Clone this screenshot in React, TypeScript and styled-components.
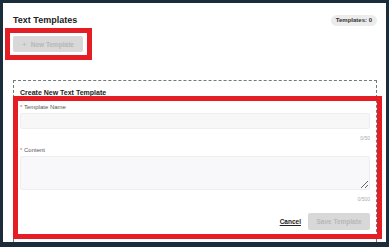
import styled, { createGlobalStyle } from "styled-components";

const GlobalStyle = createGlobalStyle`
  * { box-sizing: border-box; }
  html, body { margin: 0; padding: 0; }
  body {
    background: #1b2c3a;
    font-family: "Liberation Sans", Arial, sans-serif;
  }
`;

export default function App() {
  return (
    <>
      <GlobalStyle />
      <Frame>
        <Panel>
          <Header>
            <Title>Text Templates</Title>
            <Badge>Templates: 0</Badge>
          </Header>

          <Marked $gap={10}>
            <GhostButton disabled>
              <span>+</span> New Template
            </GhostButton>
            <Highlight $top={-8} $right={-9} $bottom={-8} $left={-8} />
          </Marked>

          <FormBox>
            <FormTitle>Create New Text Template</FormTitle>
            <Marked $gap={6} $stretch>
              <Fields>
                <Field>
                  <Label>
                    <Star>*</Star> Template Name
                  </Label>
                  <TextInput defaultValue="" />
                  <Counter>0/50</Counter>
                </Field>
                <Field>
                  <Label>
                    <Star>*</Star> Content
                  </Label>
                  <TextArea defaultValue="" />
                  <Counter>0/500</Counter>
                </Field>
                <Actions>
                  <CancelLink>Cancel</CancelLink>
                  <SaveButton disabled>Save Template</SaveButton>
                </Actions>
              </Fields>
              <Highlight $top={-7} $right={-12} $bottom={-9} $left={-7} />
            </Marked>
          </FormBox>
        </Panel>
      </Frame>
    </>
  );
}

const Frame = styled.div`
  width: 389px;
  height: 247px;
  padding: 3px 3px 5px 3px;
  background: #1b2c3a;
`;

const Panel = styled.div`
  height: 100%;
  background: #fff;
  padding: 11px 9px 0 10px;
  display: flex;
  flex-direction: column;
  overflow: hidden;
`;

const Header = styled.div`
  display: flex;
  align-items: center;
  justify-content: space-between;
  height: 12px;
`;

const Title = styled.h1`
  margin: 0;
  font-size: 9px;
  font-weight: 700;
  color: #222;
`;

const Badge = styled.span`
  height: 11px;
  padding: 0 5px;
  border-radius: 6px;
  background: #ececec;
  color: #333;
  font-size: 6px;
  font-weight: 600;
  display: flex;
  align-items: center;
`;

/* annotation overlays */
const Marked = styled.div<{ $gap: number; $stretch?: boolean }>`
  position: relative;
  margin-top: ${({ $gap }) => $gap}px;
  align-self: ${({ $stretch }) => ($stretch ? "stretch" : "flex-start")};
`;

const Highlight = styled.div<{
  $top: number;
  $right: number;
  $bottom: number;
  $left: number;
}>`
  position: absolute;
  top: ${({ $top }) => $top}px;
  right: ${({ $right }) => $right}px;
  bottom: ${({ $bottom }) => $bottom}px;
  left: ${({ $left }) => $left}px;
  border: 5px solid #e51d24;
  pointer-events: none;
`;

const GhostButton = styled.button`
  width: 70px;
  height: 16px;
  border: none;
  border-radius: 2px;
  background: #d8d8d8;
  color: #b7b7b7;
  font-family: inherit;
  font-size: 6.5px;
  font-weight: 700;
  display: flex;
  align-items: center;
  justify-content: center;
  gap: 4px;
  padding: 0;

  span {
    font-size: 8px;
    font-weight: 400;
  }
`;

const FormBox = styled.div`
  margin-top: 28px;
  flex: 1;
  border: 1px dashed #6e7c7c;
  border-bottom: none;
  padding: 7px 6px 0 6px;
  display: flex;
  flex-direction: column;
`;

const FormTitle = styled.h2`
  margin: 0;
  font-size: 7px;
  font-weight: 700;
  color: #222;
  line-height: 9px;
`;

const Fields = styled.div`
  display: flex;
  flex-direction: column;
`;

const Field = styled.div`
  display: flex;
  flex-direction: column;
  & + & {
    margin-top: 4px;
  }
`;

const Label = styled.label`
  font-size: 6px;
  line-height: 8px;
  color: #555;
  margin-bottom: 2px;
`;

const Star = styled.span`
  color: #e05a5a;
`;

const TextInput = styled.input`
  display: block;
  height: 16px;
  width: 100%;
  border: 1px solid #eeeeee;
  border-radius: 2px;
  background: #f7f7f7;
  outline: none;
`;

const TextArea = styled.textarea`
  display: block;
  height: 34px;
  width: 100%;
  border: 1px solid #eeeeee;
  border-radius: 2px;
  background: #f8f8fa;
  resize: vertical;
  outline: none;
`;

const Counter = styled.div`
  margin-top: 5px;
  text-align: right;
  font-size: 5px;
  line-height: 8px;
  color: #aaa;
`;

const Actions = styled.div`
  margin-top: 10px;
  display: flex;
  justify-content: flex-end;
  align-items: center;
  gap: 7px;
`;

const CancelLink = styled.a`
  font-size: 6.5px;
  font-weight: 700;
  color: #222;
  text-decoration: underline;
`;

const SaveButton = styled.button`
  width: 62px;
  height: 17px;
  border: none;
  border-radius: 2px;
  background: #d8d8d8;
  color: #b7b7b7;
  font-family: inherit;
  font-size: 6.5px;
  font-weight: 700;
  padding: 0;
`;
